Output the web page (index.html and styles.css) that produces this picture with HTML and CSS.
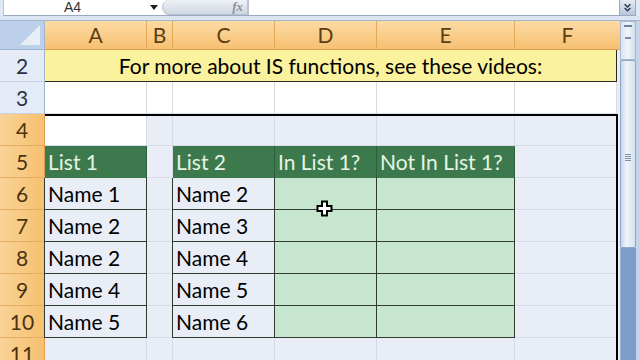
FILE: index.html
```html
<!DOCTYPE html>
<html>
<head>
<meta charset="utf-8">
<link rel="stylesheet" href="styles.css">
</head>
<body>
<div class="app">
  <div class="topbar">
    <div class="fbar">
      <div class="namebox">A4</div>
      <div class="dd"></div>
      <div class="pill"><span class="fx">fx</span></div>
      <div class="formula"></div>
    </div>
    <div class="expand">
      <svg width="16" height="16" viewBox="0 0 16 16"><path d="M5 4 L8 7 L11 4 M5 8 L8 11 L11 8" fill="none" stroke="#2a3a50" stroke-width="1.6"/></svg>
    </div>
  </div>
  <div class="strip"></div>
  <div class="main">
    <div class="sheet">
      <div class="corner"><div class="tri"></div></div>
      <div class="ch">A</div><div class="ch">B</div><div class="ch">C</div><div class="ch">D</div><div class="ch">E</div><div class="ch last">F</div>

      <div class="rh">2</div>
      <div class="banner">For more about IS functions, see these videos:</div>

      <div class="rh">3</div>
      <div class="c w"></div><div class="c w"></div><div class="c w"></div><div class="c w"></div><div class="c w"></div><div class="c w"></div>

      <div class="rh sel">4</div>
      <div class="c w"></div><div class="c"></div><div class="c"></div><div class="c"></div><div class="c"></div><div class="c"></div>

      <div class="rh sel">5</div>
      <div class="g">List 1</div><div class="c"></div><div class="g">List 2</div><div class="g">In List 1?</div><div class="g">Not In List 1?</div><div class="c"></div>

      <div class="rh sel">6</div>
      <div class="n">Name 1</div><div class="c"></div><div class="n">Name 2</div><div class="gc"></div><div class="gc"></div><div class="c"></div>

      <div class="rh sel">7</div>
      <div class="n">Name 2</div><div class="c"></div><div class="n">Name 3</div><div class="gc"></div><div class="gc"></div><div class="c"></div>

      <div class="rh sel">8</div>
      <div class="n">Name 2</div><div class="c"></div><div class="n">Name 4</div><div class="gc"></div><div class="gc"></div><div class="c"></div>

      <div class="rh sel">9</div>
      <div class="n">Name 4</div><div class="c"></div><div class="n">Name 5</div><div class="gc"></div><div class="gc"></div><div class="c"></div>

      <div class="rh sel">10</div>
      <div class="n">Name 5</div><div class="c"></div><div class="n">Name 6</div><div class="gc"></div><div class="gc"></div><div class="c"></div>

      <div class="rh sel">11</div>
      <div class="c"></div><div class="c"></div><div class="c"></div><div class="c"></div><div class="c"></div><div class="c"></div>

      <div class="selbox"></div>
      <svg class="cursor" width="17" height="17" viewBox="0 0 17 17"><path d="M6 1.5 H11 V6 H15.5 V11 H11 V15.5 H6 V11 H1.5 V6 H6 Z" fill="#fff" stroke="#000" stroke-width="2"/></svg>
    </div>
    <div class="vscroll">
      <div class="sbtn"><div class="split"></div><div class="up"></div></div>
      <div class="thumb"><div class="grip"></div></div>
      <div class="track"></div>
    </div>
  </div>
</div>
</body>
</html>
```
FILE: styles.css
```css
* { box-sizing: border-box; }
html, body { margin: 0; padding: 0; }
body { width: 640px; height: 360px; overflow: hidden; background: #fff; font-family: Lato, "Liberation Sans", sans-serif; }
.app { width: 640px; height: 360px; display: flex; flex-direction: column; overflow: hidden; }
.topbar { height: 16px; flex-shrink: 0; display: flex; background: #dfe8f5; }
.fbar { flex: 1; display: flex; align-items: stretch; background: #fff; margin-left: 3px; border-bottom: 1px solid #9aa9c0; border-left: 1px solid #b8c4d6; }
.namebox { width: 142px; padding-left: 60px; font-size: 14px; line-height: 15px; color: #333; font-family: "Liberation Sans", sans-serif; }
.dd { width: 16px; position: relative; }
.dd::after { content: ""; position: absolute; left: 4px; top: 5px; border-left: 4px solid transparent; border-right: 4px solid transparent; border-top: 5px solid #222; }
.pill { width: 86px; background: linear-gradient(#eef2f7, #cfd7e3); border-radius: 8px 0 0 8px; border: 1px solid #b8c2d2; border-top: none; display: flex; justify-content: flex-end; align-items: center; padding-right: 4px; }
.fx { font-family: "Liberation Serif", serif; font-style: italic; font-weight: bold; color: #8a929e; font-size: 13px; }
.formula { flex: 1; border-left: 1px solid #b8c2d2; }
.expand { width: 17px; margin-right: 4px; background: linear-gradient(#e4ebf5, #b7c6da); border: 1px solid #98a8c0; border-top: none; display: flex; align-items: center; justify-content: center; }
.strip { height: 5px; flex-shrink: 0; background: #dbe5f3; border-bottom: 1px solid #a6b6cd; }
.main { flex: 1; min-height: 0; display: flex; overflow: hidden; }
.sheet { width: 620px; position: relative; display: grid; grid-template-columns: 45px 102px 26px 102px 102px 138px 102px 3px; grid-template-rows: 29px repeat(10, 32px); background: #e9edf5; align-content: start; overflow: hidden; }
.corner { background: #bdd0ea; border-right: 1px solid #9eb6ce; border-bottom: 1px solid #9eb6ce; position: relative; grid-column: 1; }
.tri { position: absolute; right: 4px; bottom: 4px; width: 0; height: 0; border-left: 20px solid transparent; border-bottom: 20px solid #e8eef6; }
.ch { background: linear-gradient(#fcdba4, #f7c072); border-right: 1px solid #e3a95a; border-bottom: 1px solid #e09c48; text-align: center; font-size: 21px; line-height: 28px; color: #5b3e12; }
.ch.last { grid-column: 7 / span 2; border-right: none; }
.rh { grid-column: 1; background: #e4ebf6; border-right: 1px solid #9eb6ce; border-bottom: 1px solid #c5d3e6; text-align: center; font-size: 21px; line-height: 32px; color: #27324a; }
.rh.sel { background: linear-gradient(90deg, #f9d396, #f6c070); border-right: 1px solid #e09c48; border-bottom: 1px solid #e6ad62; color: #4a3310; }
.banner { grid-column: 2 / span 6; background: #faf29c; border-right: 1px solid #2a2a2a; border-bottom: 1px solid #2a2a2a; text-align: center; font-size: 21px; line-height: 32px; color: #000; }
.c { border-right: 1px solid #d6dbe6; border-bottom: 1px solid #d6dbe6; }
.c.w { background: #fff; }
.g { background: #3c7a4d; color: #e6f4e4; font-size: 21px; line-height: 32px; padding-left: 3px; border-right: 1px solid #2f5f3c; white-space: nowrap; }
.n { background: #e9edf5; color: #000; font-size: 21px; line-height: 32px; padding-left: 3px; border: 1px solid #2e3a32; border-top: none; margin-left: -1px; }
.gc { background: #c6e6d0; border-right: 1px solid #2e3a32; border-bottom: 1px solid #2e3a32; }
.selbox { position: absolute; left: 45px; top: 93px; width: 573px; height: 260px; border-top: 2px solid #000; border-right: 2px solid #000; pointer-events: none; }
.cursor { position: absolute; left: 316px; top: 179px; }
.vscroll { flex: 1; display: flex; flex-direction: column; background: #c4d4ea; padding: 0 4px 0 0; }
.sbtn { height: 39px; flex-shrink: 0; background: linear-gradient(90deg, #d9e3f0, #f0f4f9, #d3dded); border: 1px solid #a9b9d0; position: relative; }
.split { position: absolute; left: 3px; right: 3px; top: 3px; height: 2px; background: #6c80a0; }
.up { position: absolute; left: 4px; right: 4px; top: 15px; height: 2px; background: #7a8cab; }
.thumb { height: 188px; flex-shrink: 0; background: linear-gradient(90deg, #c8d6ea, #eef3fa 40%, #d8e2f0); border: 1px solid #8ea6c6; border-radius: 2px; position: relative; }
.grip { position: absolute; left: 4px; right: 4px; top: 93px; height: 7px; background: repeating-linear-gradient(#7e90ad 0 1px, transparent 1px 2px); }
.track { flex: 1; background: #7c9dc8; border-left: 1px solid #9fb5d6; }
```
